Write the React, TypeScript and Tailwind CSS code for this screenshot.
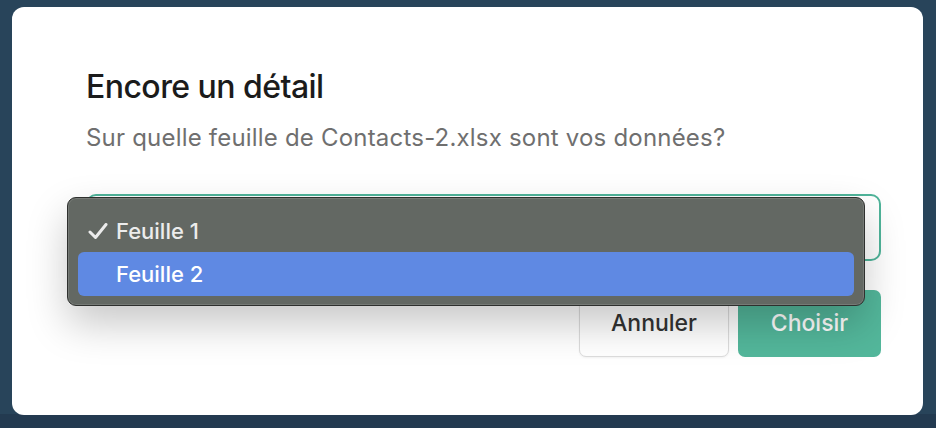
export default function App() {
  return (
    <div
      className="relative h-[428px] w-[936px] overflow-hidden bg-[#28445a] pt-[7px] pl-[12px]"
      style={{ fontFamily: "Inter, 'Noto Sans', sans-serif" }}
    >
      {/* darker strip of the page behind the overlay */}
      <div className="pointer-events-none absolute inset-0 flex flex-col justify-end">
        <div className="h-[14px] w-full bg-[#233a50]" />
      </div>

      <div className="relative flex h-[408px] w-[911px] flex-col rounded-[12px] bg-white pl-[74px] pr-[42px] pt-[61px]">
        <h1 className="text-[32px] font-medium leading-[38px] tracking-[-0.55px] text-[#1b1b1b]">
          Encore un détail
        </h1>
        <p className="mt-[17px] text-[24px] leading-[30px] tracking-[0.2px] text-[#6f6f6f]">
          Sur quelle feuille de Contacts-2.xlsx sont vos données?
        </p>

        <div className="relative mt-[41px]">
          <div className="h-[67px] w-full rounded-[10px] border-2 border-[#4fb49a] bg-white" />

          {/* open menu */}
          <div className="absolute left-[-19px] top-[3px] z-10 w-[798px] rounded-[9px] border border-[#2e302e] bg-[#636863] px-[10px] pb-[9px] pt-[14px] shadow-[0_18px_40px_rgba(0,0,0,0.22),inset_0_0_0_1px_rgba(255,255,255,0.12)]">
            <div className="flex h-[38px] items-center text-[22px] font-medium text-[#ececec]">
              <svg width="20" height="16" viewBox="0 0 20 16" className="ml-[10px] mr-[8px]">
                <path d="M2 9 L7.5 14.5 L18 1.5" fill="none" stroke="#ececec" strokeWidth="3" strokeLinecap="round" strokeLinejoin="round" />
              </svg>
              <span>Feuille 1</span>
            </div>
            <div className="mt-[2px] flex h-[44px] items-center rounded-[6px] bg-[#5f89e3] pl-[38px] text-[22px] font-medium text-white">
              Feuille 2
            </div>
          </div>
        </div>

        <div className="mt-[29px] flex justify-end gap-[9px]">
          <button className="h-[67px] w-[150px] rounded-[7px] border border-[#dcdcdc] bg-white text-[23px] font-medium text-[#333333] shadow-[0_1px_2px_rgba(0,0,0,0.05)]">
            Annuler
          </button>
          <button className="h-[67px] w-[143px] rounded-[7px] bg-[#53b79b] text-[23px] font-medium text-white">
            Choisir
          </button>
        </div>
      </div>
    </div>
  );
}
